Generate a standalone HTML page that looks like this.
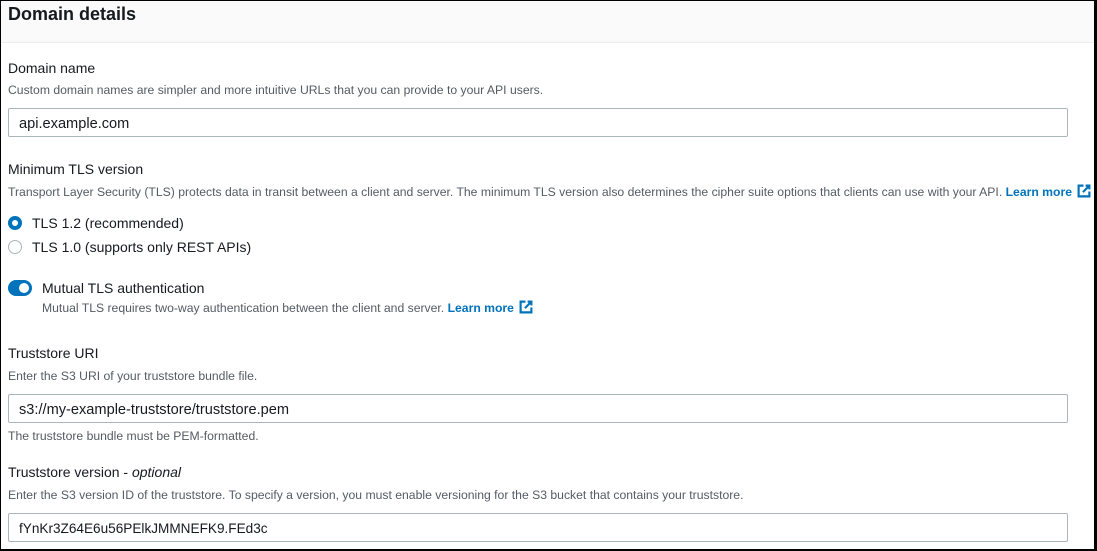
<!DOCTYPE html>
<html><head><style>
*{box-sizing:border-box;margin:0;padding:0}
body{width:1097px;height:551px;overflow:hidden;background:#fff;font-family:"Liberation Sans",sans-serif;color:#16191f;position:relative}
.frame{position:absolute;left:0;top:0;width:1097px;height:551px;border:1px solid #000;border-right:3px solid #000;border-bottom:2px solid #000}
.hdr{position:absolute;left:1px;top:1px;width:1093px;height:42px;background:#fafafa;border-bottom:1px solid #eaeded}
.t{position:absolute;white-space:nowrap}
h1{position:absolute;left:8px;top:4px;font-size:18px;font-weight:bold}
.lab{font-size:14px}
.desc{font-size:12.2px;color:#545b64}
.inp{position:absolute;left:8px;width:1060px;height:29px;border:1px solid #aab7b8;border-radius:2px;font-size:14.6px;padding:7px 10px 0}
a{color:#0073bb;font-weight:bold;text-decoration:none}
.ext{display:inline-block;vertical-align:-2px;margin-left:5px}
.radio{position:absolute;left:8px;width:14px;height:14px;border-radius:50%}
</style></head><body>
<div class="hdr"></div>
<h1>Domain details</h1>
<div class="t lab" style="left:8px;top:60px">Domain name</div>
<div class="t desc" style="left:8px;top:83px">Custom domain names are simpler and more intuitive URLs that you can provide to your API users.</div>
<div class="inp" style="top:108px">api.example.com</div>
<div class="t lab" style="left:8px;top:161px">Minimum TLS version</div>
<div class="t desc" style="left:8px;top:184px">Transport Layer Security (TLS) protects data in transit between a client and server. The minimum TLS version also determines the cipher suite options that clients can use with your API. <a>Learn more</a><svg class="ext" width="14" height="14" viewBox="0 0 13 13"><path d="M6 1.5H1.5v10h10V7M8 1.5h3.5V5M11.5 1.5L5.5 7.5" fill="none" stroke="#0073bb" stroke-width="2"/></svg></div>
<div class="radio" style="top:216px;border:4px solid #0073bb"></div>
<div class="t lab" style="left:32px;top:215px">TLS 1.2 (recommended)</div>
<div class="radio" style="top:240px;border:1px solid #aab7b8"></div>
<div class="t lab" style="left:32px;top:239px">TLS 1.0 (supports only REST APIs)</div>
<div style="position:absolute;left:8px;top:280px;width:24px;height:16px;border-radius:8px;background:#0073bb"><div style="position:absolute;right:3px;top:3px;width:10px;height:10px;border-radius:50%;background:#fff"></div></div>
<div class="t lab" style="left:42px;top:280px">Mutual TLS authentication</div>
<div class="t desc" style="left:42px;top:300px">Mutual TLS requires two-way authentication between the client and server. <a>Learn more</a><svg class="ext" width="14" height="14" viewBox="0 0 13 13"><path d="M6 1.5H1.5v10h10V7M8 1.5h3.5V5M11.5 1.5L5.5 7.5" fill="none" stroke="#0073bb" stroke-width="2"/></svg></div>
<div class="t lab" style="left:8px;top:345px">Truststore URI</div>
<div class="t desc" style="left:8px;top:369px">Enter the S3 URI of your truststore bundle file.</div>
<div class="inp" style="top:394px">s3://my-example-truststore/truststore.pem</div>
<div class="t desc" style="left:8px;top:429px">The truststore bundle must be PEM-formatted.</div>
<div class="t lab" style="left:8px;top:464px">Truststore version - <i>optional</i></div>
<div class="t desc" style="left:8px;top:488px">Enter the S3 version ID of the truststore. To specify a version, you must enable versioning for the S3 bucket that contains your truststore.</div>
<div class="inp" style="top:513px;font-size:13.6px">fYnKr3Z64E6u56PElkJMMNEFK9.FEd3c</div>
<div class="frame"></div>
</body></html>
